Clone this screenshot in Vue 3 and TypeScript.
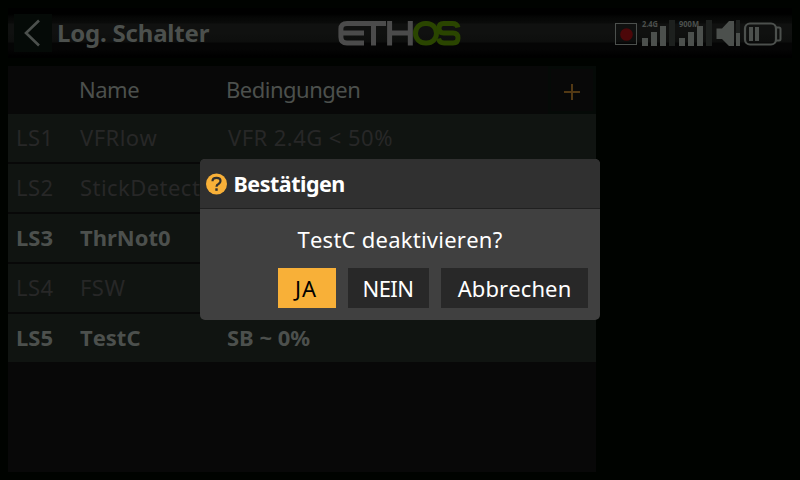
<script setup lang="ts">
interface LogicSwitch {
  id: string
  name: string
  condition: string
  active: boolean
}

const switches: LogicSwitch[] = [
  { id: 'LS1', name: 'VFRlow', condition: 'VFR 2.4G < 50%', active: false },
  { id: 'LS2', name: 'StickDetect', condition: '', active: false },
  { id: 'LS3', name: 'ThrNot0', condition: '', active: true },
  { id: 'LS4', name: 'FSW', condition: '', active: false },
  { id: 'LS5', name: 'TestC', condition: 'SB ~ 0%', active: true },
]
</script>

<template>
  <div class="screen">
    <header class="topbar">
      <button class="back" aria-label="Zurück">
        <svg width="38" height="38" viewBox="0 0 38 38"><path d="M25 6.500L12 19L25 31.500" fill="none" stroke="#4c504d" stroke-width="2.600" /></svg>
      </button>
      <h1 class="title">Log. Schalter</h1>
      <svg class="logo" width="124" height="26" viewBox="0 0 124 26" fill="none" stroke-width="5">
        <g stroke="#4b4b4b">
          <path d="M48 3.500H9Q2.900 3.500 2.900 9V17Q2.900 23 9 23H26M3 13H26M35.500 3.500V25.500" />
          <path d="M51.600 1V25.500M72.300 1V25.500M51 13H73" />
        </g>
        <g stroke="#2a4500">
          <rect x="77.500" y="3.500" width="21" height="19.500" rx="9.700" />
          <path d="M120 7.500Q119 3.500 114.500 3.500H105.500Q101 3.500 101 8.300Q101 13 105.500 13H115Q120 13 120 18Q120 23 115 23H106Q101.500 23 100.500 18.500" />
        </g>
      </svg>
      <svg class="status" width="168" height="28" viewBox="0 0 168 28">
        <rect x=".500" y="4.500" width="21" height="21" fill="none" stroke="#4c504d" />
        <circle cx="11.500" cy="15.500" r="6.300" fill="#4c0709" />
        <g fill="#4c504d" font-family="'Noto Sans', sans-serif" font-weight="700" font-size="8.500">
          <text x="27" y="7.500" textLength="16" lengthAdjust="spacingAndGlyphs">2.4G</text>
          <text x="64" y="7.500" textLength="20" lengthAdjust="spacingAndGlyphs">900M</text>
        </g>
        <g fill="#4c504d">
          <path d="M27 19h6v8h-6zM36 13h6v14h-6zM45 7h6v20h-6z" />
          <path d="M64 19h6v8h-6zM73 13h6v14h-6zM82 7h6v20h-6z" />
          <path d="M101.500 9.500H107L114 2H119V27H114L107 20H101.500z" />
          <path d="M121 14h4v13h-4z" />
          <path d="M134 8h4v14h-4zM140 8h4v14h-4z" />
        </g>
        <path d="M54 1h6v26h-6zM91 1h6v26h-6zM121 1h4v13h-4z" fill="#1d201e" />
        <rect x="130" y="4.500" width="31" height="21" rx="5" fill="none" stroke="#4c504d" stroke-width="2.200" />
        <path d="M161 8.500H164Q165.500 8.500 165.500 10V20Q165.500 21.500 164 21.500H161" fill="none" stroke="#4c504d" stroke-width="2" />
      </svg>
    </header>

    <main class="list">
      <div class="row head">
        <span class="id"></span>
        <span class="name">Name</span>
        <span class="condition">Bedingungen</span>
        <button class="add" aria-label="Hinzufügen">
          <svg width="16" height="16" viewBox="0 0 16 16"><path d="M0 8H16M8 0V16" stroke="#533914" stroke-width="2" /></svg>
        </button>
      </div>
      <div
        v-for="item in switches"
        :key="item.id"
        class="row item"
        :class="{ active: item.active }"
      >
        <span class="id">{{ item.id }}</span>
        <span class="name">{{ item.name }}</span>
        <span class="condition">{{ item.condition }}</span>
      </div>
    </main>

    <section class="dialog" role="dialog">
      <div class="dialog-head">
        <svg width="22" height="22" viewBox="0 0 22 22">
          <circle cx="10.500" cy="11" r="10.500" fill="#f8b038" />
          <path d="M6.500 8.200Q6.500 4.900 10.500 4.900Q14.500 4.900 14.500 8Q14.500 9.700 12.500 11Q10.500 12.100 10.500 13.700" fill="none" stroke="#303030" stroke-width="2.200" />
          <rect x="9.300" y="15.300" width="2.400" height="2.500" fill="#303030" />
        </svg>
        <h2>Bestätigen</h2>
      </div>
      <p class="message">TestC deaktivieren?</p>
      <div class="actions">
        <button class="yes">JA</button>
        <button class="no">NEIN</button>
        <button class="cancel">Abbrechen</button>
      </div>
    </section>
  </div>
</template>

<style>
body {
  margin: 0;
  background: #000300;
}
</style>

<style scoped>
.screen {
  box-sizing: border-box;
  position: relative;
  width: 800px;
  height: 480px;
  padding: 8px;
  overflow: hidden;
  background: #000300;
  color: #4c504d;
  font: 22px/46px 'Noto Sans', sans-serif;
  font-kerning: none;
}
button {
  display: flex;
  align-items: center;
  justify-content: center;
  margin: 0;
  padding: 0;
  border: 0;
  color: inherit;
  font: inherit;
  font-kerning: none;
}
h1, h2, p { margin: 0; }
.topbar {
  display: flex;
  align-items: center;
  height: 50px;
  background: linear-gradient(#000000 0 6px, #050605 9px, #0a0b0a 15px, #101110 16px 25px, #0d0e0d 34px, #050505 35px 41px, #000000 48px);
}
.back {
  width: 38px;
  height: 38px;
  margin-left: 6px;
  background: #050a07;
}
.title {
  width: 280px;
  padding-left: 5px;
  padding-bottom: 1px;
  font-size: 24px;
  font-weight: 700;
  letter-spacing: -0.2px;
  white-space: nowrap;
}
.logo { flex: none; margin-left: 0.5px; }
.status { margin-left: auto; margin-right: 9px; flex: none; }
.list {
  display: flex;
  flex-direction: column;
  gap: 2px;
  width: 588px;
  height: 406px;
  margin-top: 8px;
  background: #080808;
}
.row {
  display: grid;
  grid-template-columns: 63px 147px 1fr 48px;
  height: 48px;
  flex: none;
  padding-left: 8px;
  box-sizing: border-box;
  white-space: nowrap;
}
.head { margin-bottom: -2px; letter-spacing: -0.5px; }
.add {
  box-sizing: border-box;
  width: 48px;
  height: 48px;
  padding-top: 4px;
  border: 3px solid #050a07;
  background: #080808;
}
.item { background: #101411; color: #272727; letter-spacing: 0.45px; }
.item .name { padding-left: 1px; }
.item .condition { padding-left: 2px; }
.item.active { color: #4c504d; font-weight: 700; letter-spacing: 0; }
.item.active .condition { padding-left: 1px; }
.dialog {
  position: absolute;
  left: 200px;
  top: 159px;
  width: 400px;
  height: 161px;
  border-radius: 5px;
  overflow: hidden;
  background: #404040;
  color: #fff;
}
.dialog-head {
  display: flex;
  align-items: center;
  gap: 5px;
  height: 49px;
  padding-left: 6px;
  border-bottom: 1px solid #202020;
  background: #303030;
}
.dialog-head h2 { padding-left: 0.5px; font-size: 21.5px; letter-spacing: -0.5px; }
.message { height: 59px; line-height: 61px; letter-spacing: 0.25px; text-align: center; }
.actions {
  display: flex;
  justify-content: flex-end;
  gap: 12px;
  padding-right: 12px;
}
.actions button { height: 40px; background: #282828; line-height: 42px; }
.actions .yes { width: 58px; padding-right: 2px; box-sizing: border-box; letter-spacing: 1px; background: #f8b038; color: #000; }
.actions .no { width: 81px; padding-right: 1px; box-sizing: border-box; letter-spacing: -0.5px; }
.actions .cancel { width: 147px; letter-spacing: 0.1px; }
</style>
